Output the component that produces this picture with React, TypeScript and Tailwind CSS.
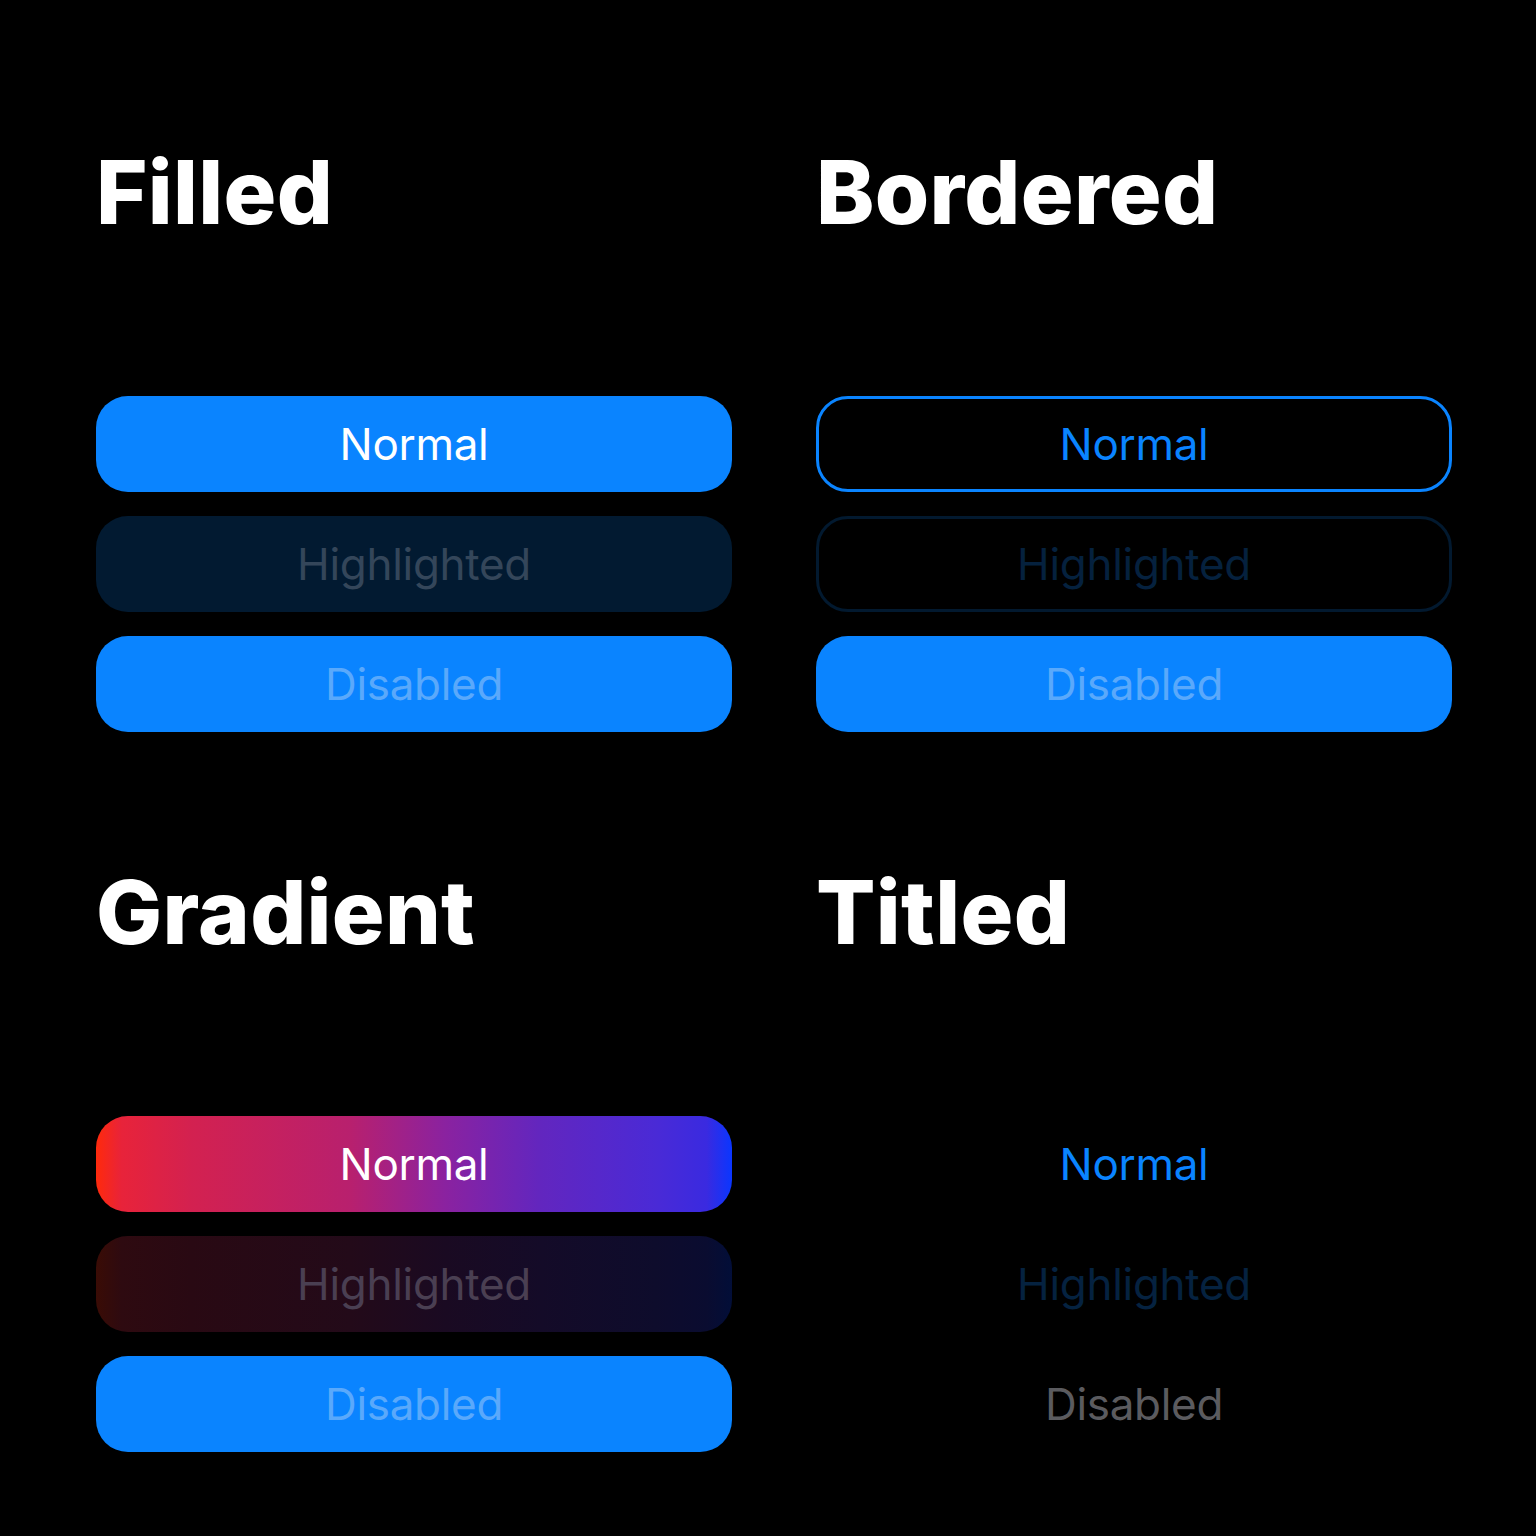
import React from "react";

function Btn({ cls, text, textCls }: { cls: string; text: string; textCls: string }) {
  return (
    <div className={`h-[96px] w-full rounded-[32px] flex items-center justify-center ${cls}`}>
      <span className={`text-[44px] leading-none tracking-[-0.3px] ${textCls}`}>{text}</span>
    </div>
  );
}

function Section({ title, children }: { title: string; children: React.ReactNode }) {
  return (
    <div className="flex flex-col">
      <h2 className="text-[88px] leading-[88px] font-extrabold text-white tracking-[0.3px] h-[88px]">{title}</h2>
      <div className="mt-[160px] flex flex-col gap-[24px]">{children}</div>
    </div>
  );
}

export default function App() {
  return (
    <div className="w-[1536px] h-[1536px] bg-black font-[family-name:Inter,'Noto_Sans',sans-serif]">
      <div className="grid grid-cols-[636px_636px] gap-x-[84px] gap-y-[136px] pl-[96px] pt-[148px]">
        <Section title="Filled">
          <Btn cls="bg-[#0a84ff]" text="Normal" textCls="text-white" />
          <Btn cls="bg-[#021a31]" text="Highlighted" textCls="text-[#34465a]" />
          <Btn cls="bg-[#0a84ff]" text="Disabled" textCls="text-[#5aa9fb]" />
        </Section>
        <Section title="Bordered">
          <Btn cls="border-[3px] border-[#0a84ff]" text="Normal" textCls="text-[#0a84ff]" />
          <Btn cls="border-[3px] border-[#02192f]" text="Highlighted" textCls="text-[#05213e]" />
          <Btn cls="bg-[#0a84ff]" text="Disabled" textCls="text-[#5aa9fb]" />
        </Section>
        <Section title="Gradient">
          <Btn
            cls="bg-[linear-gradient(to_right,#ff2a0c_0%,#e8233a_4%,#d32150_15%,#b8206e_40%,#8a22a0_55%,#6226bf_70%,#4a2ad6_88%,#3a2ae0_96%,#0a36ff_100%)]"
            text="Normal"
            textCls="text-white"
          />
          <Btn
            cls="bg-[linear-gradient(to_right,#3a0c05_0%,#2e0a10_4%,#290913_15%,#230a19_40%,#1a0a22_55%,#140b28_70%,#0e0c2c_88%,#0a0c30_96%,#020e38_100%)]"
            text="Highlighted"
            textCls="text-[#4a3f52]"
          />
          <Btn cls="bg-[#0a84ff]" text="Disabled" textCls="text-[#5aa9fb]" />
        </Section>
        <Section title="Titled">
          <Btn cls="" text="Normal" textCls="text-[#0a84ff]" />
          <Btn cls="" text="Highlighted" textCls="text-[#052240]" />
          <Btn cls="" text="Disabled" textCls="text-[#5b5b5f]" />
        </Section>
      </div>
    </div>
  );
}
